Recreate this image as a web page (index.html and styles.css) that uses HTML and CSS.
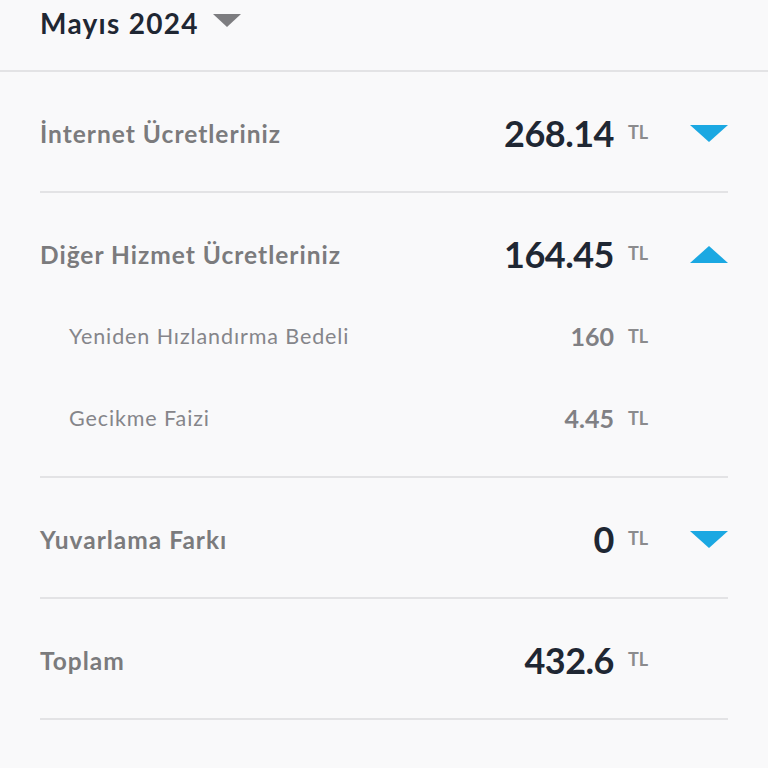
FILE: index.html
```html
<!DOCTYPE html>
<html lang="tr">
<head>
<meta charset="utf-8">
<link rel="stylesheet" href="styles.css">
</head>
<body>
<header class="header">
  <h1 class="month">Mayıs 2024</h1>
  <span class="month-caret"></span>
</header>
<main class="list">
  <section class="group">
    <div class="row">
      <span class="label">İnternet Ücretleriniz</span>
      <span class="amount">268.14</span>
      <span class="cur">TL</span>
      <span class="toggle"><span class="tri down"></span></span>
    </div>
  </section>
  <section class="group">
    <div class="row">
      <span class="label">Diğer Hizmet Ücretleriniz</span>
      <span class="amount">164.45</span>
      <span class="cur">TL</span>
      <span class="toggle"><span class="tri up"></span></span>
    </div>
    <div class="row sub">
      <span class="label">Yeniden Hızlandırma Bedeli</span>
      <span class="amount">160</span>
      <span class="cur">TL</span>
      <span class="toggle"></span>
    </div>
    <div class="row sub">
      <span class="label">Gecikme Faizi</span>
      <span class="amount">4.45</span>
      <span class="cur">TL</span>
      <span class="toggle"></span>
    </div>
  </section>
  <section class="group">
    <div class="row">
      <span class="label">Yuvarlama Farkı</span>
      <span class="amount">0</span>
      <span class="cur">TL</span>
      <span class="toggle"><span class="tri down"></span></span>
    </div>
  </section>
  <section class="group">
    <div class="row">
      <span class="label">Toplam</span>
      <span class="amount">432.6</span>
      <span class="cur">TL</span>
      <span class="toggle"></span>
    </div>
  </section>
</main>
</body>
</html>
```
FILE: styles.css
```css
* { box-sizing: border-box; }
html, body {
  margin: 0;
  background: #f9f9fa;
  font-family: Lato, "Open Sans", sans-serif;
}
.header {
  height: 72px;
  border-bottom: 2px solid #e3e3e5;
  display: flex;
  align-items: flex-start;
  padding: 5px 0 0 40px;
}
.month {
  margin: 0;
  font-size: 28px;
  line-height: 36px;
  font-weight: 700;
  color: #1f2733;
  letter-spacing: 1.3px;
}
.month-caret {
  margin: 9px 0 0 14px;
  width: 0;
  height: 0;
  border-left: 14px solid transparent;
  border-right: 14px solid transparent;
  border-top: 13px solid #7d7d80;
}
.list {
  margin: 0 40px;
}
.group {
  border-bottom: 2px solid #e3e3e5;
  padding: 41px 0 38px;
  display: flex;
  flex-direction: column;
  gap: 42px;
}
.row {
  display: flex;
  align-items: center;
  height: 40px;
}
.label {
  flex: 1;
  font-size: 24.5px;
  font-weight: 700;
  color: #7b7b7d;
  letter-spacing: 1px;
}
.amount {
  font-size: 36px;
  font-weight: 700;
  color: #1f2733;
  letter-spacing: -0.5px;
}
.cur {
  align-self: flex-start;
  margin: 8px 0 0 14px;
  width: 20px;
  font-size: 18px;
  font-weight: 700;
  color: #8b8b8d;
}
.toggle {
  width: 80px;
  display: flex;
  justify-content: flex-end;
}
.tri {
  width: 0;
  height: 0;
  border-left: 19px solid transparent;
  border-right: 19px solid transparent;
}
.tri.down { border-top: 17px solid #1ba8e2; }
.tri.up { border-bottom: 17px solid #1ba8e2; }
.sub .label {
  padding-left: 29px;
  font-size: 21.5px;
  font-weight: 400;
  color: #85858a;
  letter-spacing: 0.9px;
}
.sub .amount {
  font-size: 25px;
  color: #808084;
  letter-spacing: 0;
}
.sub .cur {
  margin-top: 9px;
}
```
